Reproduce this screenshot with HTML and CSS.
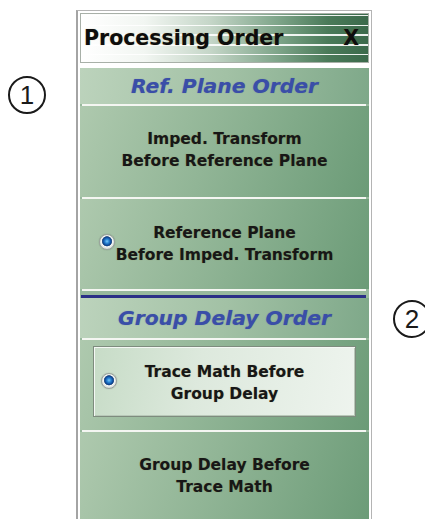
FILE: index.html
```html
<!DOCTYPE html>
<html>
<head>
<meta charset="utf-8">
<link rel="stylesheet" href="styles.css">
</head>
<body>
<div class="page">
  <div class="callout callout-1">1</div>
  <div class="callout callout-2">2</div>
  <div class="panel">
    <div class="titlebar">
      <span class="title">Processing Order</span>
      <span class="close">X</span>
    </div>
    <div class="content">
      <div class="group-title gt-1">Ref. Plane Order</div>
      <div class="rule"></div>
      <div class="option opt-1">
        <div class="label">Imped. Transform<br>Before Reference Plane</div>
      </div>
      <div class="rule"></div>
      <div class="option opt-2">
        <span class="radio"></span>
        <div class="label">Reference Plane<br>Before Imped. Transform</div>
      </div>
      <div class="rule"></div>
      <div class="navy"></div>
      <div class="group-title gt-2">Group Delay Order</div>
      <div class="rule"></div>
      <div class="option opt-3">
        <div class="button">
          <span class="radio"></span>
          <div class="label">Trace Math Before<br>Group Delay</div>
        </div>
      </div>
      <div class="rule"></div>
      <div class="option opt-4">
        <div class="label">Group Delay Before<br>Trace Math</div>
      </div>
    </div>
  </div>
</div>
</body>
</html>
```

FILE: styles.css
```css
html, body {
  margin: 0;
  padding: 0;
  background: #ffffff;
  overflow: hidden;
}

.page {
  position: relative;
  width: 425px;
  height: 519px;
  padding: 10px 0 0 76px;
  box-sizing: border-box;
  font-family: "DejaVu Sans", Verdana, sans-serif;
}

.callout {
  position: absolute;
  width: 34px;
  height: 34px;
  border: 2px solid #1a1a1a;
  border-radius: 50%;
  display: flex;
  align-items: center;
  justify-content: center;
  font-family: "Liberation Sans", Arial, sans-serif;
  font-size: 26px;
  color: #1a1a1a;
  line-height: 1;
}

.callout-1 { left: 8px; top: 76px; }
.callout-2 { left: 393px; top: 300px; }

.panel {
  width: 296px;
  height: 520px;
  box-sizing: border-box;
  border-left: 2px solid #a4a4a4;
  border-top: 1px solid #b4b4b4;
  border-right: 1px solid #b4b4b4;
  padding: 2px 2px 0 2px;
  background: #ffffff;
  display: flex;
  flex-direction: column;
}

.titlebar {
  height: 50px;
  box-sizing: border-box;
  border: 1px solid #a8b0a8;
  display: flex;
  align-items: center;
  justify-content: space-between;
  padding: 0 9px 0 3px;
  background:
    repeating-linear-gradient(to bottom, rgba(255,255,255,0) 0px, rgba(255,255,255,0) 1px, rgba(255,255,255,0.9) 1px, rgba(255,255,255,0.9) 2.5px, rgba(255,255,255,0) 2.5px, rgba(255,255,255,0) 9.7px),
    linear-gradient(to right, #ffffff 0%, #f2f6f2 22%, #c5d6c8 45%, #80a68b 68%, #4a7a59 86%, #3b6a4b 100%);
  font-weight: bold;
  font-size: 20.5px;
  color: #0d0d0d;
}

.title, .close {
  text-shadow: 0 0 1px rgba(120, 90, 0, 0.5);
}

.content {
  margin-top: 5px;
  flex: 1;
  display: flex;
  flex-direction: column;
  background: #98b99d;
}

.group-title {
  display: flex;
  align-items: center;
  justify-content: center;
  font-weight: bold;
  font-style: italic;
  font-size: 20.3px;
  color: #3a4ea8;
  text-shadow: 0 0 1px rgba(40, 50, 140, 0.4);
  background: linear-gradient(100deg, #bcd3bc 0%, #a2c1a5 50%, #7ea889 100%);
}

.gt-1 { height: 36px; }
.gt-2 { height: 40px; }

.rule {
  height: 2px;
  margin: 0 3px 0 2px;
  background: #f4f6f2;
}

.navy {
  height: 3px;
  margin: 4px 3px 0 1px;
  background: #2a2f86;
}

.option {
  position: relative;
  display: flex;
  align-items: center;
  justify-content: center;
  background: linear-gradient(110deg, #aec9ae 0%, #91b596 45%, #6b9b77 100%);
}

.opt-1 { height: 91px; padding-bottom: 4px; box-sizing: border-box; }
.opt-2 { height: 90px; }
.opt-3 { height: 90px; align-items: flex-start; padding-top: 6px; box-sizing: border-box; }
.opt-4 { flex: 1; align-items: flex-start; padding-top: 22px; }

.label {
  text-align: center;
  font-weight: bold;
  font-size: 15.5px;
  line-height: 22px;
  color: #171717;
  text-shadow: 0 0 1px rgba(110, 90, 20, 0.45);
}

.button {
  position: relative;
  width: 263px;
  height: 71px;
  box-sizing: border-box;
  border: 1px solid #7e8c7e;
  box-shadow: inset 1px 1px 0 #f4f8f4, inset -1px -1px 0 #b8c8b8;
  background: linear-gradient(100deg, #c7dcc7 0%, #dde9dd 40%, #eef4ee 100%);
  display: flex;
  align-items: center;
  justify-content: center;
  padding-top: 2px;
}

.radio {
  position: absolute;
  width: 16px;
  height: 16px;
  box-sizing: border-box;
  border-radius: 50%;
  border: 1px solid #9aa29d;
  box-shadow: 0 0 1px rgba(0,0,0,0.35);
  background: radial-gradient(circle at 50% 45%, #7cc8f8 0px, #2a86d6 2px, #0c4392 4.2px, #3c5f8a 4.8px, #f4f6f5 5.4px, #d6dcd8 7.5px);
}

.opt-2 .radio { left: 19px; top: 35px; }
.button .radio { left: 7px; top: 26px; }
```
